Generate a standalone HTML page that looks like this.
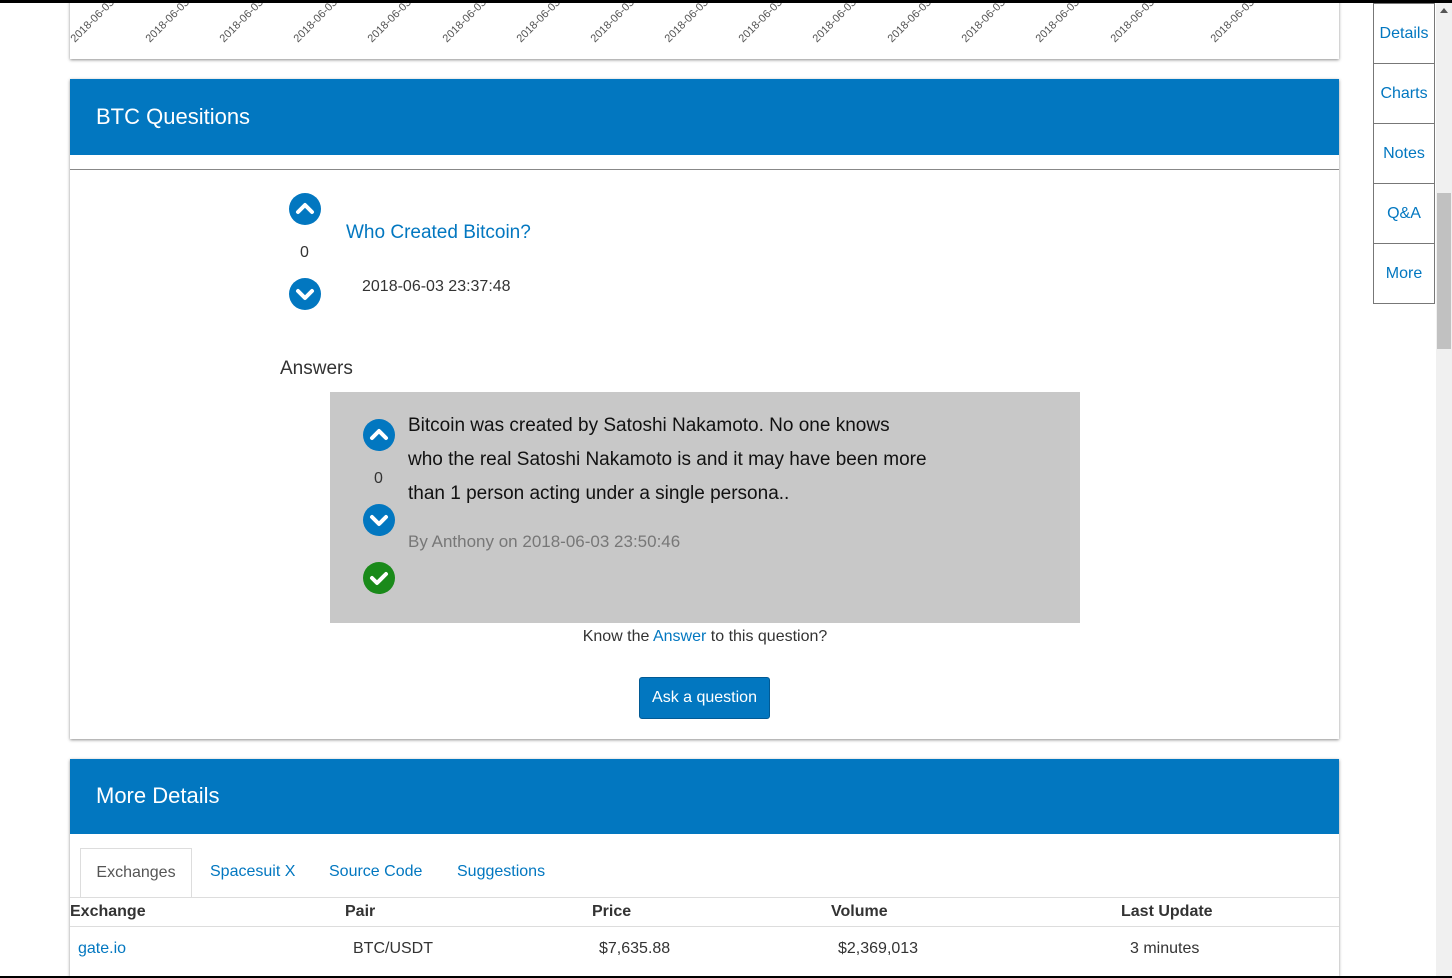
<!DOCTYPE html>
<html><head><meta charset="utf-8"><style>
*{box-sizing:border-box}
html,body{margin:0;width:1452px;height:978px;overflow:hidden}
body{background:#fff;font-family:"Liberation Sans",sans-serif;color:#333;position:relative}
.topbar{position:absolute;left:0;top:0;width:1452px;height:3px;background:#000;z-index:10}
.botbar{position:absolute;left:0;top:976px;width:1452px;height:2px;background:#000;z-index:10}
.card{position:absolute;left:70px;width:1269px;background:#fff;box-shadow:0 1px 3px rgba(0,0,0,.45)}
.head{background:#0277c0;color:#fff;font-size:22px;padding-left:26px}
.lbl{position:absolute;font-size:11px;color:#555;transform:rotate(-45deg);transform-origin:left bottom;white-space:nowrap;line-height:11px;top:34px}
.circ{position:absolute;width:32px;height:32px;border-radius:50%;background:#0277c0}
.circ svg{position:absolute;left:0;top:0}
a{color:#0277c0;text-decoration:none}
.side{position:absolute;left:1373px;top:3px;width:62px;border:1px solid #777;border-top:none;background:#fff}
.side div{height:60px;border-top:1px solid #777;color:#0277c0;font-size:16px;text-align:center;line-height:60px}
.sb{position:absolute;left:1436px;top:3px;width:16px;height:973px;background:#f0f0f0}
.thumb{position:absolute;left:1437px;top:193px;width:14px;height:156px;background:#c1c1c1}
</style></head><body>
<div class="topbar"></div>
<div class="card" style="top:-10px;height:69px"></div>
<div style="position:absolute;left:0;top:0;width:1340px;height:58px;overflow:hidden">
<span class="lbl" style="left:77px">2018-06-03</span><span class="lbl" style="left:152px">2018-06-03</span><span class="lbl" style="left:226px">2018-06-03</span><span class="lbl" style="left:300px">2018-06-03</span><span class="lbl" style="left:374px">2018-06-03</span><span class="lbl" style="left:449px">2018-06-03</span><span class="lbl" style="left:523px">2018-06-03</span><span class="lbl" style="left:597px">2018-06-03</span><span class="lbl" style="left:671px">2018-06-03</span><span class="lbl" style="left:745px">2018-06-03</span><span class="lbl" style="left:819px">2018-06-03</span><span class="lbl" style="left:894px">2018-06-03</span><span class="lbl" style="left:968px">2018-06-03</span><span class="lbl" style="left:1042px">2018-06-03</span><span class="lbl" style="left:1117px">2018-06-03</span><span class="lbl" style="left:1217px">2018-06-03</span>
</div>

<div class="card" style="top:79px;height:660px">
<div class="head" style="height:76px;line-height:76px">BTC Quesitions</div>
<div style="height:14px"></div>
<div style="border-top:1px solid #888"></div>
</div>
<div class="circ" style="left:289px;top:193px"><svg width="32" height="32"><path d="M9 19 L16 12 L23 19" stroke="#fff" stroke-width="4" fill="none" stroke-linecap="round" stroke-linejoin="round"/></svg></div>
<div style="position:absolute;left:300px;top:244px;font-size:16px">0</div>
<div class="circ" style="left:289px;top:278px"><svg width="32" height="32"><path d="M9 13 L16 20 L23 13" stroke="#fff" stroke-width="4" fill="none" stroke-linecap="round" stroke-linejoin="round"/></svg></div>
<div style="position:absolute;left:346px;top:222px;font-size:19px;color:#0277c0">Who Created Bitcoin?</div>
<div style="position:absolute;left:362px;top:278px;font-size:16px">2018-06-03 23:37:48</div>
<div style="position:absolute;left:280px;top:358px;font-size:19px">Answers</div>
<div style="position:absolute;left:330px;top:392px;width:750px;height:231px;background:#c8c8c8"></div>
<div class="circ" style="left:363px;top:419px"><svg width="32" height="32"><path d="M9 19 L16 12 L23 19" stroke="#fff" stroke-width="4" fill="none" stroke-linecap="round" stroke-linejoin="round"/></svg></div>
<div style="position:absolute;left:374px;top:470px;font-size:16px">0</div>
<div class="circ" style="left:363px;top:504px"><svg width="32" height="32"><path d="M9 13 L16 20 L23 13" stroke="#fff" stroke-width="4" fill="none" stroke-linecap="round" stroke-linejoin="round"/></svg></div>
<div class="circ" style="left:363px;top:562px;background:#1a8a1a"><svg width="32" height="32"><path d="M9 16 L14 21 L23 12" stroke="#fff" stroke-width="4" fill="none" stroke-linecap="round" stroke-linejoin="round"/></svg></div>
<div style="position:absolute;left:408px;top:409px;font-size:19px;line-height:34px;color:#111;width:600px;white-space:nowrap">Bitcoin was created by Satoshi Nakamoto. No one knows<br>who the real Satoshi Nakamoto is and it may have been more<br>than 1 person acting under a single persona..</div>
<div style="position:absolute;left:408px;top:532px;font-size:17px;color:#777">By Anthony on 2018-06-03 23:50:46</div>
<div style="position:absolute;left:330px;width:750px;top:628px;text-align:center;font-size:16px">Know the <a>Answer</a> to this question?</div>
<div style="position:absolute;left:639px;top:677px;width:131px;height:42px;background:#0277c0;border:1px solid #015a94;border-radius:3px;color:#fff;font-size:16px;text-align:center;line-height:40px">Ask a question</div>

<div class="card" style="top:759px;height:217px">
<div class="head" style="height:75px;line-height:73px">More Details</div>
<div style="position:absolute;left:10px;top:89px;width:112px;height:50px;border:1px solid #ddd;border-bottom:none;background:#fff;font-size:16px;line-height:48px;text-align:center;color:#555">Exchanges</div>
<div style="position:absolute;left:140px;top:104px;font-size:16px;color:#0277c0">Spacesuit X</div>
<div style="position:absolute;left:259px;top:104px;font-size:16px;color:#0277c0">Source Code</div>
<div style="position:absolute;left:387px;top:104px;font-size:16px;color:#0277c0">Suggestions</div>
<div style="position:absolute;left:0;top:138px;width:1269px;border-top:1px solid #ddd"></div>
<div style="position:absolute;left:0;top:167px;width:1269px;border-top:1px solid #ddd"></div>
<div style="position:absolute;left:0;top:144px;font-size:16px;font-weight:bold;color:#333">Exchange</div>
<div style="position:absolute;left:275px;top:144px;font-size:16px;font-weight:bold">Pair</div>
<div style="position:absolute;left:522px;top:144px;font-size:16px;font-weight:bold">Price</div>
<div style="position:absolute;left:761px;top:144px;font-size:16px;font-weight:bold">Volume</div>
<div style="position:absolute;left:1051px;top:144px;font-size:16px;font-weight:bold">Last Update</div>
<div style="position:absolute;left:8px;top:181px;font-size:16px;color:#0277c0">gate.io</div>
<div style="position:absolute;left:283px;top:181px;font-size:16px">BTC/USDT</div>
<div style="position:absolute;left:529px;top:181px;font-size:16px">$7,635.88</div>
<div style="position:absolute;left:768px;top:181px;font-size:16px">$2,369,013</div>
<div style="position:absolute;left:1060px;top:181px;font-size:16px">3 minutes</div>
</div>

<div class="side"><div>Details</div><div>Charts</div><div>Notes</div><div>Q&amp;A</div><div>More</div></div>
<div class="sb"></div><div class="thumb"></div>
<div style="position:absolute;left:1440px;top:8px;width:0;height:0;border-left:4px solid transparent;border-right:4px solid transparent;border-bottom:5px solid #555"></div>
<div class="botbar"></div>
</body></html>
